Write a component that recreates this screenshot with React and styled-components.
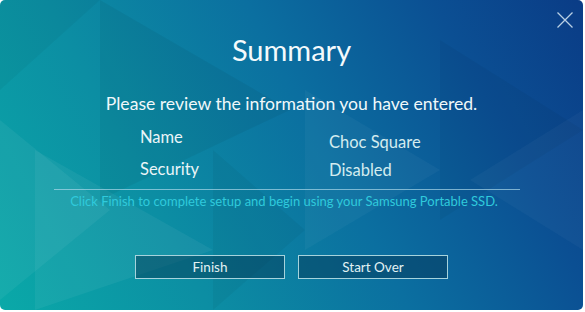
import React from "react";
import styled, { createGlobalStyle } from "styled-components";

const Global = createGlobalStyle`
  html, body {
    margin: 0;
    padding: 0;
    background: #ffffff;
  }
  body {
    font-family: Lato, "Liberation Sans", sans-serif;
  }
`;

const Dialog = styled.div`
  position: relative;
  width: 583px;
  height: 310px;
  border-radius: 5px;
  overflow: hidden;
  background: linear-gradient(62deg, #0aa9a8 0%, #0c8ea3 28%, #0b6fa0 55%, #0b4f93 80%, #0a3c86 100%);
  display: flex;
  flex-direction: column;
  align-items: center;
`;

const Pattern = styled.svg`
  position: absolute;
  inset: 0;
  width: 100%;
  height: 100%;
  pointer-events: none;
`;

const Content = styled.div`
  position: relative;
  width: 100%;
  display: flex;
  flex-direction: column;
  align-items: center;
`;

const Close = styled.button`
  position: absolute;
  top: 11px;
  right: 9px;
  width: 18px;
  height: 18px;
  padding: 0;
  border: none;
  background: none;
  cursor: pointer;
`;

const Title = styled.h1`
  margin: 33.6px 0 0;
  font-size: 29px;
  line-height: 32px;
  font-weight: 400;
  color: #f4fafc;
`;

const Subtitle = styled.p`
  margin: 27.4px 0 0;
  font-size: 17.6px;
  line-height: 22px;
  color: #f0f8fa;
`;

const Table = styled.div`
  margin-top: 11.6px;
  width: 100%;
  display: flex;
  flex-direction: column;
  gap: 12px;
`;

const Row = styled.div`
  display: grid;
  grid-template-columns: 189px 1fr;
  padding-left: 140px;
  font-size: 16.5px;
  line-height: 20px;
  height: 20px;
`;

const Label = styled.span`
  color: #eaf5f8;
`;

const Value = styled.span`
  color: #d4ecef;
  padding-top: ${(p) => p.$offset}px;
`;

const Divider = styled.hr`
  align-self: flex-start;
  margin: 10.4px 0 0 54px;
  width: 466px;
  height: 1px;
  border: none;
  background: rgba(170, 215, 232, 0.7);
`;

const Note = styled.p`
  margin: 2px 0 0;
  padding-right: 15px;
  font-size: 13px;
  line-height: 18px;
  color: #2fcadc;
`;

const Buttons = styled.div`
  margin-top: 45px;
  display: flex;
  gap: 13px;
`;

const Button = styled.button`
  width: 150px;
  height: 24px;
  padding: 0;
  border: 1.5px solid #a6d3dc;
  background: rgba(5, 50, 80, 0.45);
  color: #e2f2f4;
  font-family: Lato, "Liberation Sans", sans-serif;
  font-size: 13.5px;
  line-height: 20px;
  cursor: pointer;
`;

const rows = [
  { label: "Name", value: "Choc Square", offset: 5 },
  { label: "Security", value: "Disabled", offset: 1 },
];

export default function App() {
  return (
    <>
      <Global />
      <Dialog>
        <Pattern viewBox="0 0 583 310" preserveAspectRatio="none">
          <polygon points="0,120 110,210 0,300" fill="#ffffff" opacity="0.05" />
          <polygon points="35,150 213,250 35,310" fill="#ffffff" opacity="0.05" />
          <polygon points="213,150 305,230 213,310" fill="#000000" opacity="0.04" />
          <polygon points="100,0 290,110 100,200" fill="#000000" opacity="0.05" />
          <polygon points="305,90 440,170 305,250" fill="#ffffff" opacity="0.035" />
          <polygon points="440,40 583,130 440,220" fill="#000000" opacity="0.04" />
          <polygon points="470,180 583,250 583,110" fill="#ffffff" opacity="0.03" />
          <polygon points="0,0 100,0 0,90" fill="#000000" opacity="0.04" />
        </Pattern>
        <Close aria-label="Close">
          <svg width="18" height="18" viewBox="0 0 18 18">
            <path d="M1.5 1.5 L16.5 16.5 M16.5 1.5 L1.5 16.5" stroke="#b9cfe4" strokeWidth="1.3" fill="none" />
          </svg>
        </Close>
        <Content>
          <Title>Summary</Title>
          <Subtitle>Please review the information you have entered.</Subtitle>
          <Table>
            {rows.map((r) => (
              <Row key={r.label}>
                <Label>{r.label}</Label>
                <Value $offset={r.offset}>{r.value}</Value>
              </Row>
            ))}
          </Table>
          <Divider />
          <Note>Click Finish to complete setup and begin using your Samsung Portable SSD.</Note>
          <Buttons>
            <Button>Finish</Button>
            <Button>Start Over</Button>
          </Buttons>
        </Content>
      </Dialog>
    </>
  );
}
